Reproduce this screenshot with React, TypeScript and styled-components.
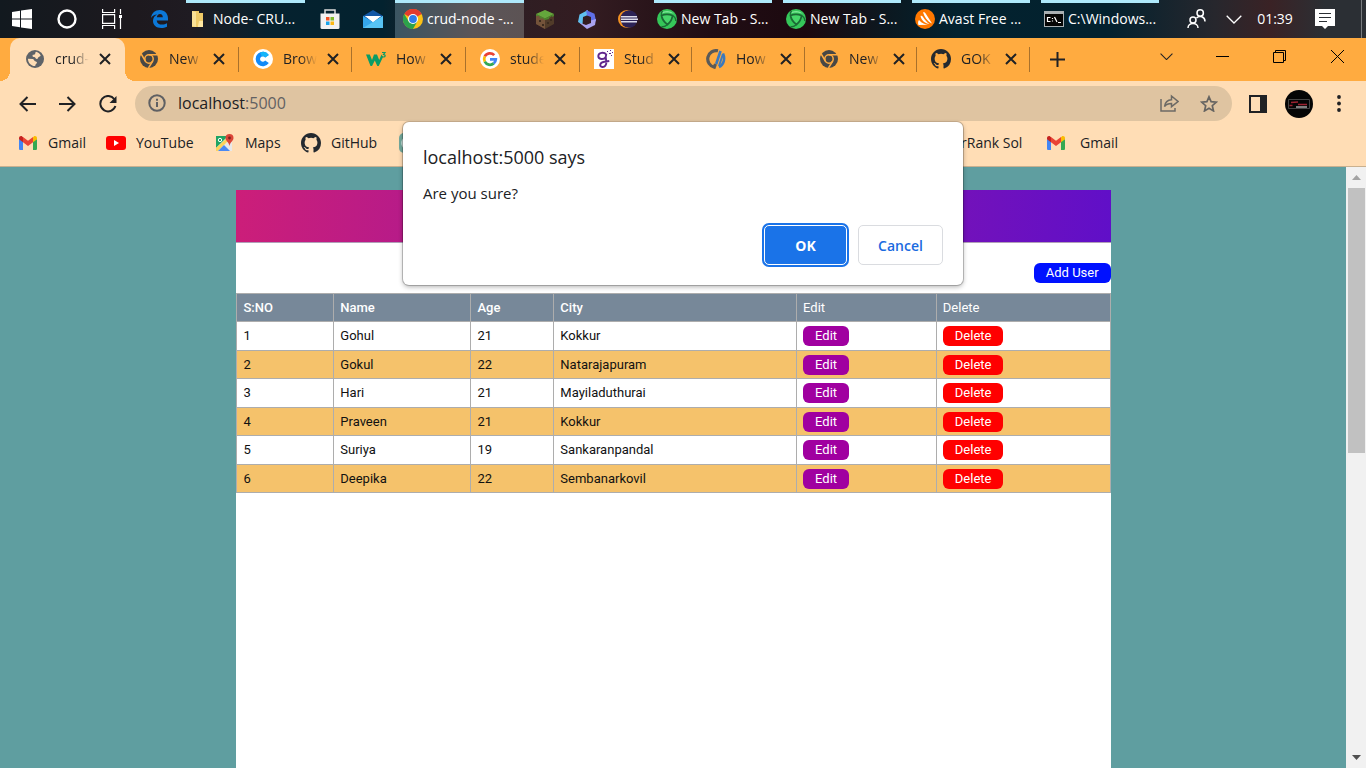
import React from "react";
import styled, { createGlobalStyle, css } from "styled-components";

const Global = createGlobalStyle`
  * { box-sizing: border-box; }
  html, body { margin: 0; padding: 0; height: 100%; }
  #root { height: 100%; }
  body { font-family: "Open Sans", "Noto Sans", sans-serif; color: #202124; overflow: hidden; }
  button, input { font-family: inherit; margin: 0; }
  svg { display: block; flex: none; }
`;

const Screen = styled.div`
  display: flex;
  flex-direction: column;
  height: 100vh;
  position: relative;
`;

/* ---------- taskbar ---------- */
const Taskbar = styled.div`
  display: flex;
  height: 38px;
  flex: none;
  padding-right: 4px;
  background: linear-gradient(90deg, #12191f 0, #1d191e 10%, #1f1b22 14%, #05222f 20%, #03222f 28%, #2b2025 33%, #331c21 43%, #200d14 52%, #1c090f 59%, #0b1820 65%, #03222f 70%, #03212e 81%, #27272d 89%, #3a2225 93%, #2b2f34 97%);
  color: #fff;
`;

const TaskIcon = styled.button<{ $w: number; $before?: number }>`
  width: ${(p) => p.$w}px;
  margin-left: ${(p) => p.$before ?? 0}px;
  display: flex;
  align-items: center;
  justify-content: center;
  border: 0;
  padding: 0;
  background: none;
  color: #fff;
`;

const TaskWindow = styled.button<{ $w: number; $active?: boolean; $before?: number }>`
  width: ${(p) => p.$w}px;
  margin-right: 11px;
  margin-left: ${(p) => p.$before ?? 0}px;
  display: flex;
  align-items: center;
  gap: 4px;
  border: 0;
  border-top: 3px solid #aee9fb;
  padding: 0 0 3px 3px;
  color: #fff;
  font-size: 14px;
  line-height: 20px;
  white-space: nowrap;
  background: none;
  ${(p) =>
    p.$active &&
    css`
      padding-left: 8px;
      background: linear-gradient(90deg, #3b5562, #5b5558 60%, #5c5354);
    `}
`;

const Tray = styled.div`
  margin-left: auto;
  display: flex;
  align-items: center;
  border-right: 1px solid #777b7e;
`;

const Clock = styled.span`
  font-size: 14px;
  line-height: 20px;
  width: 44px;
  text-align: center;
`;

/* ---------- tabs ---------- */
const TabStrip = styled.div`
  display: flex;
  height: 43px;
  flex: none;
  padding-left: 10px;
  background: #ffab40;
`;

const Tab = styled.div<{ $active?: boolean; $divider?: boolean; $w: number }>`
  width: ${(p) => p.$w}px;
  display: flex;
  align-items: center;
  padding: 0 0 2px 13px;
  position: relative;
  color: #202124;
  ${(p) =>
    p.$active &&
    css`
      padding-left: 14px;
      background: #ffddb5;
      border-radius: 10px 10px 0 0;
      &::before,
      &::after {
        content: "";
        position: absolute;
        bottom: 0;
        width: 10px;
        height: 10px;
      }
      &::before {
        left: -10px;
        background: radial-gradient(circle at 0 0, #ffab40 10px, #ffddb5 10px);
      }
      &::after {
        right: -10px;
        background: radial-gradient(circle at 100% 0, #ffab40 10px, #ffddb5 10px);
      }
    `}
  ${(p) =>
    p.$divider &&
    css`
      background: linear-gradient(#a9712b, #a9712b) no-repeat right 9px / 1px 25px;
    `}
`;

const TabIcon = styled.span`
  width: 22px;
  display: flex;
  justify-content: center;
`;

const TabTitle = styled.span`
  width: 34px;
  margin-left: 9px;
  font-size: 14px;
  line-height: 20px;
  white-space: nowrap;
  mask-image: linear-gradient(90deg, #000 50%, transparent 100%);
`;

const PlainButton = styled.button<{ $w: number }>`
  width: ${(p) => p.$w}px;
  flex: none;
  display: flex;
  align-items: center;
  justify-content: center;
  border: 0;
  padding: 0;
  background: none;
  color: #202124;
`;

const WindowButtons = styled.div`
  margin-left: auto;
  display: flex;
  height: 37px;
`;

/* ---------- address bar ---------- */
const Toolbar = styled.div`
  display: flex;
  align-items: center;
  height: 45px;
  flex: none;
  padding: 0 7px;
  background: #ffddb5;
`;

const AddressBar = styled.div`
  flex: 1;
  height: 35px;
  display: flex;
  align-items: center;
  margin: 0 6px 0 7px;
  padding: 0 3px 1px 13px;
  border-radius: 18px;
  background: #dfc4a1;
  color: #5f6063;
`;

const Address = styled.span`
  flex: 1;
  margin-left: 12px;
  font-size: 16px;
  line-height: 24px;
  color: #626163;
  b { font-weight: 400; color: #202124; }
`;

/* ---------- bookmarks ---------- */
const Bookmarks = styled.nav`
  display: flex;
  align-items: center;
  height: 41px;
  flex: none;
  padding: 0 0 6px 18px;
  background: #ffddb5;
  border-bottom: 1px solid #c9b08f;
`;

const Bookmark = styled.a<{ $w: number; $gap?: number }>`
  width: ${(p) => p.$w}px;
  display: flex;
  align-items: center;
  gap: ${(p) => p.$gap ?? 10}px;
  font-size: 14px;
  line-height: 20px;
  color: #202124;
  text-decoration: none;
  white-space: nowrap;
`;

/* ---------- page ---------- */
const Viewport = styled.div`
  flex: 1;
  min-height: 0;
  display: flex;
  background: #5f9ea0;
  font-family: Roboto, sans-serif;
`;

const PageArea = styled.main`
  flex: 1;
  display: flex;
  justify-content: center;
  padding: 23px 0 0 1px;
`;

const Sheet = styled.section`
  width: 65%;
  background: #fff;
`;

const Banner = styled.header`
  height: 53px;
  background: linear-gradient(95deg, #cc1e79, #600fc8);
  border-bottom: 1px solid #b0a0b8;
`;

const Actions = styled.div`
  display: flex;
  justify-content: flex-end;
  padding: 20px 0 10px;
`;

const Pill = styled.button<{ $bg: string }>`
  height: 20px;
  display: block;
  border: 0;
  border-radius: 6px;
  padding: 0 12px;
  background: ${(p) => p.$bg};
  color: #fff;
  font-size: 13px;
  line-height: 20px;
  font-weight: 400;
`;

const Grid = styled.table`
  width: 100%;
  table-layout: fixed;
  border-collapse: collapse;
  font-size: 13px;
  line-height: 18px;
  color: #111;
  tr { height: 29px; }
  tr:nth-child(even), thead tr { height: 28px; }
  th, td { border: 1px solid #adadad; padding: 0 6px; text-align: left; }
  th { background: #778899; color: #fff; font-weight: 500; }
  th:nth-child(n + 5) { font-weight: 400; }
  tbody tr:nth-child(even) { background: #f5c26b; }
`;

const Scrollbar = styled.div`
  width: 20px;
  display: flex;
  flex-direction: column;
  align-items: center;
  background: #f1f1f1;
`;

const ScrollArrow = styled.span`
  height: 21px;
  display: flex;
  align-items: center;
`;

const Thumb = styled.div`
  width: 17px;
  height: 265px;
  background: #c1c1c1;
  margin-bottom: auto;
`;

/* ---------- dialog ---------- */
const Dialog = styled.div`
  position: absolute;
  top: 122px;
  left: 50%;
  margin-left: -280px;
  width: 560px;
  padding: 23px 20px 20px;
  border-radius: 6px;
  background: #fff;
  box-shadow: 0 0 0 1px rgba(0, 0, 0, 0.2), 0 2px 5px rgba(0, 0, 0, 0.3);
`;

const DialogTitle = styled.h1`
  margin: 0;
  font-size: 18px;
  line-height: 24px;
  font-weight: 400;
`;

const DialogText = styled.p`
  margin: 14px 0 22px;
  font-size: 15px;
  line-height: 20px;
`;

const DialogButtons = styled.div`
  display: flex;
  justify-content: flex-end;
  gap: 11px;
`;

const DialogButton = styled.button<{ $primary?: boolean }>`
  width: 85px;
  height: 40px;
  border-radius: 5px;
  border: 1px solid #dadce0;
  background: #fff;
  color: #1a6ae0;
  font-size: 14px;
  font-weight: 600;
  padding: 0;
  ${(p) =>
    p.$primary &&
    css`
      width: 83px;
      background: #1a73e8;
      border-color: #fff;
      color: #fff;
      font-weight: 700;
      box-shadow: 0 0 0 2px #1a73e8;
    `}
`;

/* ---------- drawings ---------- */
const ChromeMono = () => (
  <svg width="18" height="18" viewBox="0 0 18 18">
    <circle cx="9" cy="9" r="9" fill="#484745" />
    <g stroke="#ffab40" strokeWidth="1.5" fill="none">
      <circle cx="9" cy="9" r="4.2" />
      <path d="M9 4.8h8.5M5.3 11L1.2 4M12.7 11l-4.2 7" />
    </g>
  </svg>
);

const ChromeColor = () => (
  <svg width="20" height="20" viewBox="0 0 20 20">
    <circle cx="10" cy="10" r="10" fill="#fbc116" />
    <path d="M10 10L1.3 5A10 10 0 0 1 18.7 5z" fill="#e33b2e" />
    <path d="M1.3 5A10 10 0 0 0 10 20l4.3-7.5L10 10 5.7 12.5z" fill="#2ba24c" />
    <circle cx="10" cy="10" r="5" fill="#fff" />
    <circle cx="10" cy="10" r="3.9" fill="#2f7de9" />
  </svg>
);

const GithubMark = ({ size = 20 }: { size?: number }) => (
  <svg width={size} height={size} viewBox="0 0 16 16" fill="#24292f">
    <path d="M8 0C3.58 0 0 3.58 0 8c0 3.54 2.29 6.53 5.47 7.59.4.07.55-.17.55-.38 0-.19-.01-.82-.01-1.49-2.01.37-2.53-.49-2.69-.94-.09-.23-.48-.94-.82-1.13-.28-.15-.68-.52-.01-.53.63-.01 1.08.58 1.23.82.72 1.21 1.87.87 2.33.66.07-.52.28-.87.51-1.07-1.78-.2-3.64-.89-3.64-3.95 0-.87.31-1.59.82-2.15-.08-.2-.36-1.02.08-2.12 0 0 .67-.21 2.2.82a7.6 7.6 0 0 1 4 0c1.53-1.04 2.2-.82 2.2-.82.44 1.1.16 1.92.08 2.12.51.56.82 1.27.82 2.15 0 3.07-1.87 3.75-3.65 3.95.29.25.54.73.54 1.48 0 1.07-.01 1.93-.01 2.2 0 .21.15.46.55.38A8 8 0 0 0 16 8c0-4.42-3.58-8-8-8z" />
  </svg>
);

const GmailMark = () => (
  <svg width="20" height="20" viewBox="0 0 20 20">
    <path d="M1 6v9.5A1.3 1.3 0 0 0 2.3 17H5V8z" fill="#4285f4" />
    <path d="M19 6v9.5a1.3 1.3 0 0 1-1.3 1.5H15V8z" fill="#34a853" />
    <path d="M15 4.3V9.2l4-3V5c0-1.8-2-2.6-3.2-1.6z" fill="#fbbc04" />
    <path d="M5 4.3V9.2l-4-3V5c0-1.8 2-2.6 3.2-1.6z" fill="#c5221f" />
    <path d="M5 9.2V4l5 3.8L15 4v5.2L10 13z" fill="#ea4335" />
  </svg>
);

const Globe = () => (
  <svg width="18" height="18" viewBox="0 0 18 18">
    <circle cx="9" cy="9" r="9" fill="#5f6368" />
    <path d="M10 1.8c2 .6 3.6 1.8 4.7 3.6-.6 1.3-1.7 1-2.4 1.9-.5.9-.4 1.8-1.7 1.7-1.5-.2-.7-1.6-2.2-1.9-1.2-.2-2-.3-1.9-1.6.2-1.2 1.9-.4 2.5-1.2.5-.8.1-1.8 1-2.5zM1.9 8.700l5 .3c1.3.3 1 1.7 2.2 2.2 1.3.5 2.1.6 1.8 1.9-.3 1-1.5 1-1.7 2.9-3.8.2-7.1-3-7.3-7.3z" fill="#ffddb5" />
  </svg>
);

const CrossMark = () => (
  <svg width="12" height="12" viewBox="0 0 12 12" stroke="#202124" strokeWidth="2">
    <path d="M1 1l10 10M11 1L1 11" />
  </svg>
);

const GoogleG = () => (
  <svg width="20" height="20" viewBox="0 0 20 20">
    <circle cx="10" cy="10" r="10" fill="#fff" />
    <g fill="none" strokeWidth="2.7">
      <path d="M14.2 6.200A5.8 5.8 0 0 0 4.8 7.4" stroke="#ea4335" />
      <path d="M4.8 7.4a5.8 5.8 0 0 0 0 5.2" stroke="#fbbc05" />
      <path d="M4.8 12.6a5.8 5.8 0 0 0 8.9 1.8" stroke="#34a853" />
      <path d="M13.7 14.4A5.8 5.8 0 0 0 15.8 10.3H10" stroke="#4285f4" />
    </g>
  </svg>
);

const CodingC = () => (
  <svg width="20" height="20" viewBox="0 0 20 20">
    <circle cx="10" cy="10" r="10" fill="#fff" />
    <path d="M14 7.200A5 5 0 1 0 14 12.8" fill="none" stroke="#128af8" strokeWidth="4.4" />
    <path d="M8 5.500A5 5 0 0 1 14 7.2" fill="none" stroke="#15b5fa" strokeWidth="4.4" />
  </svg>
);

const W3Mark = () => (
  <svg width="21" height="18" viewBox="0 0 21 18">
    <path d="M0 4.500h3.800l2.200 5.500 2-5.500h3l2.200 5.500 2.300-5.500L17 7l-4.300 9h-1.400L8.800 10.500 6 16H4.500z" fill="#0a9c66" />
    <path d="M16 2.500h3l-1.500 2c2.500.2 2 2.700-.2 2.500l-1.300-.5" fill="none" stroke="#0a9c66" strokeWidth="1.2" />
  </svg>
);

const PurpleG = () => (
  <svg width="20" height="20" viewBox="0 0 20 20">
    <path d="M0 0h20v20H0z" fill="#fff" />
    <g fill="none" stroke="#60278d" strokeWidth="1.9">
      <path d="M12.200 5.500C10 2.500 4.500 3.500 4.300 7c-.1 3.500 5.500 4 7.300 1.200M12.400 4.500c-1.200 3-.5 5.500-.1 8 .4 3.500-1.500 5.800-4 5.500-3.200-.4-3-4.200 2-5.200l5-.8" />
    </g>
    <path d="M13 2h1v1h-1zM16 1h1v1h-1zM15 4h2v1h-2zM18 3h1v1h-1zM17 6h1v1h-1z" fill="#60278d" />
  </svg>
);

const CodeMark = () => (
  <svg width="20" height="20" viewBox="0 0 20 20" fill="none">
    <path d="M12 1.800A8.400 8.400 0 1 0 8.300 18.2L9.500 15" stroke="#5a5a58" strokeWidth="3.2" />
    <path d="M10.200 15L14.500 2M13 18c4.500-2 6.500-8 4-13.500" stroke="#3b79bd" strokeWidth="2.6" />
    <path d="M13 17L17 5" stroke="#3b79bd" strokeWidth="2" />
  </svg>
);

const GreenBrowser = () => (
  <svg width="20" height="20" viewBox="0 0 20 20">
    <circle cx="10" cy="10" r="10" fill="#35c659" />
    <path d="M3 5C6 1.500 13 .5 17 5c-4-2-10-2-14 0z" fill="#7fe698" />
    <path d="M4.500 6.500Q10 4.300 15.500 6.500 15 12 10.500 15.500 5.500 12 4.500 6.500z" fill="#46d66a" stroke="#1b6a35" strokeWidth="1.8" strokeLinejoin="round" />
    <path d="M15.500 6.500Q19 8.500 18.800 12M10.500 15.500Q7.500 18.500 4.500 17.500M4.500 6.500Q3.500 4.500 5.500 2" stroke="#1b6a35" strokeWidth="1.400" fill="none" />
  </svg>
);

const Chevron = ({ w = 16, color = "#fff" }: { w?: number; color?: string }) => (
  <svg width={w} height={w / 2 + 1} viewBox="0 0 16 9" fill="none" stroke={color} strokeWidth="1.3">
    <path d="M.7.700L8 8 15.300.7" />
  </svg>
);

const tabs = [
  { title: "crud-", icon: <Globe />, w: 115, active: true },
  { title: "New", icon: <ChromeMono />, w: 114, divider: true },
  { title: "Brow", icon: <CodingC />, w: 113, divider: true },
  { title: "How", icon: <W3Mark />, w: 114, divider: true },
  { title: "stude", icon: <GoogleG />, w: 114, divider: true },
  { title: "Stud", icon: <PurpleG />, w: 112, divider: true },
  { title: "How", icon: <CodeMark />, w: 113, divider: true },
  { title: "New", icon: <ChromeMono />, w: 112, divider: true },
  { title: "GOK", icon: <GithubMark />, w: 113, divider: true },
];

const people = [
  ["Gohul", 21, "Kokkur"],
  ["Gokul", 22, "Natarajapuram"],
  ["Hari", 21, "Mayiladuthurai"],
  ["Praveen", 21, "Kokkur"],
  ["Suriya", 19, "Sankaranpandal"],
  ["Deepika", 22, "Sembanarkovil"],
];

export default function App() {
  return (
    <Screen>
      <Global />
      <Taskbar>
        <TaskIcon $w={44} aria-label="Start">
          <svg width="20" height="20" viewBox="0 0 20 20" fill="#fff">
            <path d="M0 3l8-1.200v7.700H0zM9 1.600L20 0v9.500H9zM0 10.500h8v7.700L0 17zM9 10.500h11V20L9 18.400z" />
          </svg>
        </TaskIcon>
        <TaskIcon $w={46} aria-label="Search">
          <svg width="20" height="20" viewBox="0 0 20 20" fill="none" stroke="#fff" strokeWidth="2.4">
            <circle cx="10" cy="10" r="8.5" />
          </svg>
        </TaskIcon>
        <TaskIcon $w={44} aria-label="Task view">
          <svg width="20" height="20" viewBox="0 0 20 20" fill="none" stroke="#fff" strokeWidth="1.2">
            <path d="M.6 0v3.500h12V0M.6 20v-3.500h12V20M.6 5.600h12v8.800H.6zM18.500 0v5M18.500 9v11" />
            <path d="M17 6h3v3h-3z" fill="#fff" stroke="none" />
          </svg>
        </TaskIcon>
        <TaskIcon $w={50} aria-label="Edge">
          <svg width="17" height="18" viewBox="0 0 17 18">
            <path d="M0 8C.7 2.800 4.200 0 8.700 0 14 0 17 3.800 17 8.500v2H5.700c.3 3 2.700 4.100 5.300 4.100 2 0 3.600-.5 5-1.300v3.500c-1.700.9-3.700 1.200-5.800 1.200C5.300 18 2 15.200 2 11c0-3 1.500-5.200 4-6.500C3.500 4.600 1.300 6 0 8zm5.800-.8h6C11.700 5.200 10.600 4 9 4 7.200 4 6.100 5.300 5.800 7.200z" fill="#0c78d7" />
          </svg>
        </TaskIcon>
        <TaskWindow $w={119} $before={2}>
          <svg width="20" height="20" viewBox="0 0 20 20">
            <path d="M3 2h7v2h4v14H3z" fill="#f0cb68" />
            <path d="M3 2l4 1v15l-4-1z" fill="#fbe197" />
            <path d="M9 17l1-5h4v6H9z" fill="#ffe7a1" />
          </svg>
          Node- CRU...
        </TaskWindow>
        <TaskIcon $w={28} aria-label="Store">
          <svg width="20" height="20" viewBox="0 0 20 20">
            <path d="M5 5V1h10v4" fill="none" stroke="#ddd" strokeWidth="1.5" />
            <path d="M.5 4.500h19v14a1.500 1.500 0 0 1-1.500 1.500H2A1.500 1.500 0 0 1 .5 18.500z" fill="#f1f1f1" />
            <path d="M6 8h3.500v3.500H6z" fill="#f05023" />
            <path d="M10.500 8H14v3.500h-3.500z" fill="#7eb92a" />
            <path d="M6 12.500h3.500V16H6z" fill="#18a2e9" />
            <path d="M10.500 12.500H14V16h-3.500z" fill="#fdb813" />
          </svg>
        </TaskIcon>
        <TaskIcon $w={44} $before={7} aria-label="Mail">
          <svg width="20" height="18" viewBox="0 0 20 18">
            <path d="M0 6l10-6 10 6v6H0z" fill="#1257a5" />
            <path d="M0 6l10 6 10-6v12H0z" fill="#35a7ec" />
            <path d="M2 6h16l-8 6z" fill="#fff" />
            <path d="M0 18L20 6v12z" fill="#57c3f4" />
            <path d="M2 6h16l-8 6z" fill="#fff" />
          </svg>
        </TaskIcon>
        <TaskWindow $w={129} $active>
          <ChromeColor />
          crud-node -...
        </TaskWindow>
        <TaskIcon $w={20} aria-label="Minecraft">
          <svg width="18" height="19" viewBox="0 0 18 19">
            <path d="M9 0l9 4v10l-9 5-9-5V4z" fill="#513b29" />
            <path d="M0 4l9 4v11l-9-5z" fill="#74533a" />
            <path d="M9 0l9 4-9 4.500L0 4z" fill="#64a63c" />
            <path d="M0 4l9 4.500L18 4v2l-2 1v-1l-3 2v1l-4 1-3-2-1 1-2-3H2L0 6z" fill="#4c842c" />
            <path d="M3 10h2v2H3zM6 14h2v2H6zM11 12h2v2h-2zM14 9h2v2h-2z" fill="#3c2b1e" />
          </svg>
        </TaskIcon>
        <TaskIcon $w={64} aria-label="Office">
          <svg width="18" height="19" viewBox="0 0 18 19">
            <path d="M10 0L1.500 4.500 0 12l4.500 2.700L5 7l5-2z" fill="#5fc0ef" />
            <path d="M8 0l8.500 3.700L18 11l-5 2V7L9 5.500z" fill="#5f6fe6" />
            <path d="M1 12.500L9 19l8-4 1-6-5 1.500V13l-5 2z" fill="#a9a2ef" />
          </svg>
        </TaskIcon>
        <TaskIcon $w={18} aria-label="Eclipse">
          <svg width="20" height="18" viewBox="0 0 20 18">
            <circle cx="9" cy="9" r="9" fill="#f49222" />
            <circle cx="11" cy="9" r="8.7" fill="#2c2255" />
            <path d="M3 6h16v1.500H3zM3 8.500h17V10H3zM3 11h16v1.500H3z" fill="#dcdbe9" />
          </svg>
        </TaskIcon>
        <TaskWindow $w={118} $before={17}>
          <GreenBrowser />
          New Tab - S...
        </TaskWindow>
        <TaskWindow $w={118}>
          <GreenBrowser />
          New Tab - S...
        </TaskWindow>
        <TaskWindow $w={118}>
          <svg width="20" height="20" viewBox="0 0 20 20">
            <circle cx="10" cy="10" r="10" fill="#ff7800" />
            <path d="M8 3.500c1-.7 2 0 2.500.8L17 14.500c-2-.8-4-2.500-6-5C10 8 9 6 8 3.500zM5.500 7c1-.5 1.700 0 2.500 1 2 3 4 5.500 6.500 7-4-.5-8-3-9-8zM4 11c3 3.500 6 4.500 9 4.700L3.500 16c-.7-1.500-.5-4 .5-5z" fill="#fff" />
          </svg>
          Avast Free ...
        </TaskWindow>
        <TaskWindow $w={118}>
          <svg width="20" height="16" viewBox="0 0 20 16">
            <path d="M0 0h20v16H0z" fill="#a9afb2" />
            <path d="M1 3h18v12H1z" fill="#050505" />
            <path d="M6.500 6.500H3.500v4h3M8.500 7v1M8.500 9.500v1M10.500 6l2.500 5M14 11.500h3" fill="none" stroke="#fff" strokeWidth="1.2" />
          </svg>
          C:\Windows...
        </TaskWindow>
        <Tray>
          <TaskIcon $w={38} aria-label="People">
            <svg width="19" height="20" viewBox="0 0 19 20" fill="none" stroke="#fff" strokeWidth="1.5">
              <circle cx="13.2" cy="4" r="3.2" />
              <circle cx="6" cy="11" r="3" />
              <path d="M1 19c0-6 10-6 10 0M9.500 9c3-3 8.500-1.500 8.500 3.500" />
            </svg>
          </TaskIcon>
          <TaskIcon $w={38} aria-label="Show hidden icons">
            <Chevron />
          </TaskIcon>
          <Clock>01:39</Clock>
          <TaskIcon $w={56} aria-label="Notifications">
            <svg width="20" height="20" viewBox="0 0 20 20">
              <path d="M0 0h20v17h-7l-3 3-3-3H0z" fill="#fff" />
              <path d="M4 4.500h12M4 8.500h12M4 12.500h8" stroke="#2b2f34" strokeWidth="1.2" />
            </svg>
          </TaskIcon>
          <TaskIcon $w={8} aria-label="Show desktop" />
        </Tray>
      </Taskbar>

      <TabStrip>
        {tabs.map((t, i) => (
          <Tab key={i} $w={t.w} $active={t.active} $divider={t.divider}>
            <TabIcon>{t.icon}</TabIcon>
            <TabTitle>{t.title}</TabTitle>
            <PlainButton $w={32} aria-label="Close tab">
              <CrossMark />
            </PlainButton>
          </Tab>
        ))}
        <PlainButton $w={54} aria-label="New tab">
          <svg width="15" height="15" viewBox="0 0 15 15" stroke="#202124" strokeWidth="2">
            <path d="M7.500 0v15M0 7.500h15" />
          </svg>
        </PlainButton>
        <WindowButtons>
          <PlainButton $w={56} aria-label="Search tabs">
            <Chevron w={13} color="#202124" />
          </PlainButton>
          <PlainButton $w={57} aria-label="Minimize">
            <svg width="13" height="1" viewBox="0 0 13 1">
              <path d="M0 0h13v1H0z" fill="#000" />
            </svg>
          </PlainButton>
          <PlainButton $w={57} aria-label="Restore">
            <svg width="13" height="13" viewBox="0 0 13 13" fill="none" stroke="#000">
              <path d="M.5 2.500h10v10H.5zM2.500 2V.5h10v10H11" />
            </svg>
          </PlainButton>
          <PlainButton $w={58} aria-label="Close">
            <svg width="13" height="13" viewBox="0 0 13 13" stroke="#000">
              <path d="M0 0l13 13M13 0L0 13" />
            </svg>
          </PlainButton>
        </WindowButtons>
      </TabStrip>

      <Toolbar>
        <PlainButton $w={40} aria-label="Back">
          <svg width="17" height="16" viewBox="0 0 17 16" fill="none" stroke="#202124" strokeWidth="2">
            <path d="M17 8H1.500M8.500 1L1.500 8l7 7" />
          </svg>
        </PlainButton>
        <PlainButton $w={41} aria-label="Forward">
          <svg width="17" height="16" viewBox="0 0 17 16" fill="none" stroke="#202124" strokeWidth="2">
            <path d="M0 8h15.500M8.500 1l7 7-7 7" />
          </svg>
        </PlainButton>
        <PlainButton $w={40} aria-label="Reload">
          <svg width="18" height="18" viewBox="0 0 18 18" fill="none" stroke="#202124" strokeWidth="2">
            <path d="M15.200 4A7.700 7.700 0 1 0 16.400 11" />
            <path d="M17.500 1v7h-7z" fill="#202124" stroke="none" />
          </svg>
        </PlainButton>
        <AddressBar>
          <svg width="18" height="18" viewBox="0 0 18 18" fill="none" stroke="#5f6063" strokeWidth="2">
            <circle cx="9" cy="9" r="7.7" />
            <path d="M9 8v5M9 4.800v2" />
          </svg>
          <Address>
            <b>localhost</b>:5000
          </Address>
          <PlainButton $w={40} aria-label="Share">
            <svg width="19" height="18" viewBox="0 0 19 18" fill="none" stroke="#6d6a65" strokeWidth="1.5">
              <path d="M1 5v12h14v-3M4.500 12.500c.7-4.500 3-6.500 7-6.700V2l6.500 5.500-6.500 5.200V9.500c-3.500 0-5.500 1-7 3z" />
            </svg>
          </PlainButton>
          <PlainButton $w={40} aria-label="Bookmark this tab">
            <svg width="18" height="17" viewBox="0 0 18 17" fill="none" stroke="#666461" strokeWidth="1.7">
              <path d="M9 1.800l2.100 4.900 5.200.5-4 3.500 1.200 5.200L9 13.200l-4.500 2.700 1.200-5.200-4-3.500 5.200-.5z" />
            </svg>
          </PlainButton>
        </AddressBar>
        <PlainButton $w={40} aria-label="Side panel">
          <svg width="18" height="18" viewBox="0 0 18 18">
            <path d="M0 0h18v18H0zM2 2v14h9V2z" fill="#202124" fillRule="evenodd" />
          </svg>
        </PlainButton>
        <PlainButton $w={41} aria-label="Profile">
          <svg width="28" height="28" viewBox="0 0 28 28">
            <circle cx="14" cy="14" r="14" fill="#050505" />
            <path d="M3.500 9.500h21v9h-21z" fill="none" stroke="#444" strokeWidth="1" />
            <path d="M6 12.500l7-.5M13 14.500h9M4.500 15.500h3" stroke="#9c2230" strokeWidth="1.600" />
            <path d="M11 17h11" stroke="#aaa" strokeWidth="1.500" />
          </svg>
        </PlainButton>
        <PlainButton $w={40} aria-label="Menu">
          <svg width="4" height="17" viewBox="0 0 4 17" fill="#202124">
            <circle cx="2" cy="2" r="1.9" />
            <circle cx="2" cy="8.5" r="1.9" />
            <circle cx="2" cy="15" r="1.9" />
          </svg>
        </PlainButton>
      </Toolbar>

      <Bookmarks>
        <Bookmark $w={88} href="#gmail">
          <GmailMark />
          Gmail
        </Bookmark>
        <Bookmark $w={109} href="#youtube">
          <svg width="20" height="14" viewBox="0 0 20 14">
            <rect width="20" height="14" rx="3" fill="#f00" />
            <path d="M8 4l5 3-5 3z" fill="#fff" />
          </svg>
          YouTube
        </Bookmark>
        <Bookmark $w={86} href="#maps">
          <svg width="20" height="20" viewBox="0 0 20 20">
            <path d="M1 3h16v15H1z" fill="#e8e8e8" />
            <path d="M1 3h12L1 15z" fill="#1fa463" />
            <path d="M1 18V15L13 4l2 2L3 18z" fill="#fcd35b" />
            <path d="M3 18l6-6 6 6z" fill="#4a89f3" />
            <path d="M14.500 1a4 4 0 0 1 4 4c0 3-3.500 4-4 8-.5-4-4-5-4-8a4 4 0 0 1 4-4z" fill="#db4437" />
            <circle cx="14.5" cy="5" r="1.4" fill="#7b231e" />
            <circle cx="5" cy="7" r="1.7" fill="none" stroke="#fff" />
          </svg>
          Maps
        </Bookmark>
        <Bookmark $w={98} href="#github">
          <GithubMark />
          GitHub
        </Bookmark>
        <Bookmark $w={522} href="#saved" aria-label="Saved page">
          <svg width="20" height="20" viewBox="0 0 20 20">
            <rect width="20" height="20" rx="5" fill="#73a89c" />
            <path d="M6 5a6 6 0 0 0 0 10" fill="none" stroke="#dcebe7" strokeWidth="2" />
          </svg>
        </Bookmark>
        <Bookmark $w={125} href="#hackerrank">HackerRank Sol</Bookmark>
        <Bookmark $w={90} href="#gmail-2" $gap={14}>
          <GmailMark />
          Gmail
        </Bookmark>
      </Bookmarks>

      <Viewport>
        <PageArea>
          <Sheet>
            <Banner />
            <Actions>
              <Pill $bg="#0011ff">Add User</Pill>
            </Actions>
            <Grid>
              <colgroup>
                <col style={{ width: "11.1%" }} />
                <col style={{ width: "15.7%" }} />
                <col style={{ width: "9.5%" }} />
                <col style={{ width: "27.8%" }} />
                <col style={{ width: "16%" }} />
                <col />
              </colgroup>
              <thead>
                <tr>
                  {["S:NO", "Name", "Age", "City", "Edit", "Delete"].map((h) => (
                    <th key={h}>{h}</th>
                  ))}
                </tr>
              </thead>
              <tbody>
                {people.map(([name, age, city], i) => (
                  <tr key={i}>
                    <td>{i + 1}</td>
                    <td>{name}</td>
                    <td>{age}</td>
                    <td>{city}</td>
                    <td>
                      <Pill $bg="#a000a0">Edit</Pill>
                    </td>
                    <td>
                      <Pill $bg="#ff0000">Delete</Pill>
                    </td>
                  </tr>
                ))}
              </tbody>
            </Grid>
          </Sheet>
        </PageArea>
        <Scrollbar>
          <ScrollArrow>
            <svg width="9" height="5" viewBox="0 0 9 5">
              <path d="M4.500 0L9 5H0z" fill="#a3a3a3" />
            </svg>
          </ScrollArrow>
          <Thumb />
          <ScrollArrow>
            <svg width="9" height="5" viewBox="0 0 9 5">
              <path d="M0 0h9L4.500 5z" fill="#505050" />
            </svg>
          </ScrollArrow>
        </Scrollbar>
      </Viewport>

      <Dialog role="dialog" aria-labelledby="dialog-title">
        <DialogTitle id="dialog-title">localhost:5000 says</DialogTitle>
        <DialogText>Are you sure?</DialogText>
        <DialogButtons>
          <DialogButton $primary>OK</DialogButton>
          <DialogButton>Cancel</DialogButton>
        </DialogButtons>
      </Dialog>
    </Screen>
  );
}
